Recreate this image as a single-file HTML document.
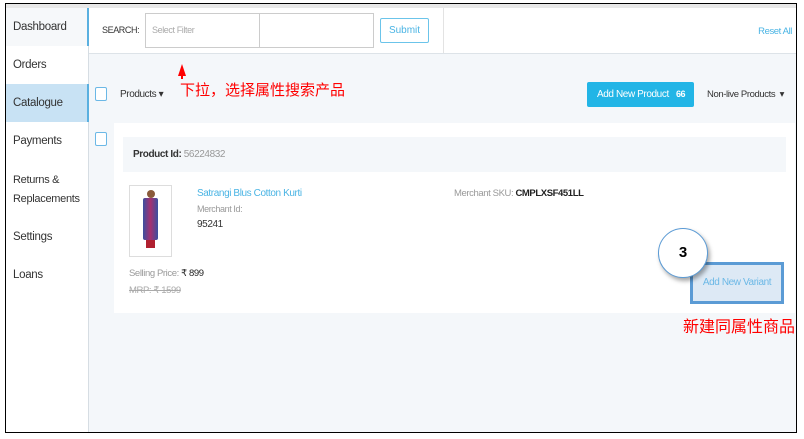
<!DOCTYPE html><html><head><style>
*{margin:0;padding:0;box-sizing:border-box}
body{width:804px;height:439px;background:#fff;font-family:"Liberation Sans","Noto Sans CJK SC",sans-serif;position:relative;overflow:hidden;font-size:10px;color:#333}
.a{position:absolute}
.c{letter-spacing:-0.4px}
.frame{left:5px;top:3px;width:792px;height:430px;border:1px solid #000;}
.side{left:6px;top:8px;width:83px;height:424px;background:#fff;border-right:1px solid #d6dde3}
.it{position:absolute;left:0;width:83px;padding-left:7px;font-size:11.5px;color:#333;letter-spacing:-0.3px}
.main{left:89px;top:54px;width:707px;height:378px;background:#f4f7fa}
.cb{width:12px;height:14px;border:1.5px solid #6bb8e6;border-radius:2px;background:#fff}
.red{color:#f00;font-size:15px}
</style></head><body>
<div class="a frame"></div>
<div class="a" style="left:6px;top:4px;width:790px;height:4px;background:#e8e8e8"></div>
<div class="a side">
<div class="it" style="top:0;height:38px;line-height:38px;background:#f6f8fa;border-right:2px solid #5ab0e0">Dashboard</div>
<div class="it" style="top:38px;height:38px;line-height:38px">Orders</div>
<div class="it" style="top:76px;height:38px;line-height:38px;background:#c8e2f4;border-right:2px solid #5ab0e0">Catalogue</div>
<div class="it" style="top:114px;height:38px;line-height:38px">Payments</div>
<div class="it" style="top:163px;line-height:19px;font-size:11px">Returns &amp;<br>Replacements</div>
<div class="it" style="top:223px">Settings</div>
<div class="it" style="top:261px">Loans</div>
</div>
<div class="a" style="left:89px;top:8px;width:707px;height:46px;background:#fff;border-bottom:1px solid #dde3e8"></div>
<div class="a c" style="left:102px;top:25px;font-size:9px">SEARCH:</div>
<div class="a" style="left:145px;top:13px;width:229px;height:35px;border:1px solid #ccc;background:#fff"></div>
<div class="a" style="left:259px;top:14px;width:1px;height:33px;background:#ccc"></div>
<div class="a c" style="left:152px;top:25px;font-size:9px;color:#aaa">Select Filter</div>
<div class="a" style="left:380px;top:18px;width:49px;height:25px;border:1px solid #6bc4ea;border-radius:2px;color:#4ab4e4;font-size:10px;text-align:center;line-height:23px">Submit</div>
<div class="a" style="left:443px;top:8px;width:1px;height:45px;background:#e3e3e3"></div>
<div class="a c" style="right:12px;top:26px;font-size:9.5px;color:#4ab4e4">Reset All</div>
<div class="a main"></div>
<div class="a" style="left:178px;top:64px;width:0;height:0;border-left:4px solid transparent;border-right:4px solid transparent;border-bottom:12px solid #f00"></div>
<div class="a" style="left:181px;top:74px;width:2px;height:5px;background:#f00"></div>
<div class="a red" style="left:180px;top:79px">下拉，选择属性搜索产品</div>
<div class="a cb" style="left:95px;top:87px"></div>
<div class="a c" style="left:120px;top:89px;font-size:10px">Products ▾</div>
<div class="a c" style="left:587px;top:82px;width:107px;height:25px;background:#22b5e6;border-radius:2px;color:#fff;font-size:10px;line-height:25px;padding-left:10px">Add New Product &nbsp;&nbsp;<b style="font-size:9px">66</b></div>
<div class="a c" style="left:707px;top:89px;font-size:9.5px">Non-live Products &nbsp;▾</div>
<div class="a cb" style="left:95px;top:132px"></div>
<div class="a" style="left:114px;top:123px;width:681px;height:190px;background:#fff"></div>
<div class="a" style="left:123px;top:137px;width:663px;height:35px;background:#f4f7fa"></div>
<div class="a c" style="left:133px;top:149px;font-size:10px"><b>Product Id:</b> <span style="color:#999">56224832</span></div>
<div class="a" style="left:129px;top:185px;width:43px;height:72px;border:1px solid #ddd;background:#fff"></div>
<div class="a" style="left:147px;top:190px;width:8px;height:8px;border-radius:50%;background:#8a5a3a"></div>
<div class="a" style="left:143px;top:198px;width:15px;height:42px;background:linear-gradient(90deg,#3a4fa0,#a53070,#3a4fa0);border-radius:2px"></div>
<div class="a" style="left:146px;top:240px;width:9px;height:8px;background:#b02030"></div>
<div class="a c" style="left:197px;top:188px;font-size:10px;color:#4ab4e4">Satrangi Blus Cotton Kurti</div>
<div class="a c" style="left:197px;top:204px;font-size:9px;color:#999">Merchant Id:</div>
<div class="a c" style="left:197px;top:219px;font-size:10px">95241</div>
<div class="a c" style="left:454px;top:188px;font-size:9.5px;color:#999">Merchant SKU: <b style="color:#222">CMPLXSF451LL</b></div>
<div class="a c" style="left:129px;top:268px;font-size:9.5px;color:#999">Selling Price: <span style="color:#222">₹ 899</span></div>
<div class="a c" style="left:129px;top:285px;font-size:9.5px;color:#aaa;text-decoration:line-through">MRP: ₹ 1599</div>
<div class="a c" style="left:690px;top:262px;width:94px;height:42px;border:3px solid #5b9bd5;background:#dde9f5;color:#6bb8e6;font-size:10px;text-align:center;line-height:36px">Add New Variant</div>
<div class="a" style="left:658px;top:228px;width:50px;height:50px;border-radius:50%;border:1.5px solid #5b9bd5;background:#fff;box-shadow:2px 3px 4px rgba(0,0,0,.35);text-align:center;line-height:47px;font-size:15px;font-weight:bold;color:#000">3</div>
<div class="a red" style="left:683px;top:313px;font-size:16px">新建同属性商品</div>
</body></html>
